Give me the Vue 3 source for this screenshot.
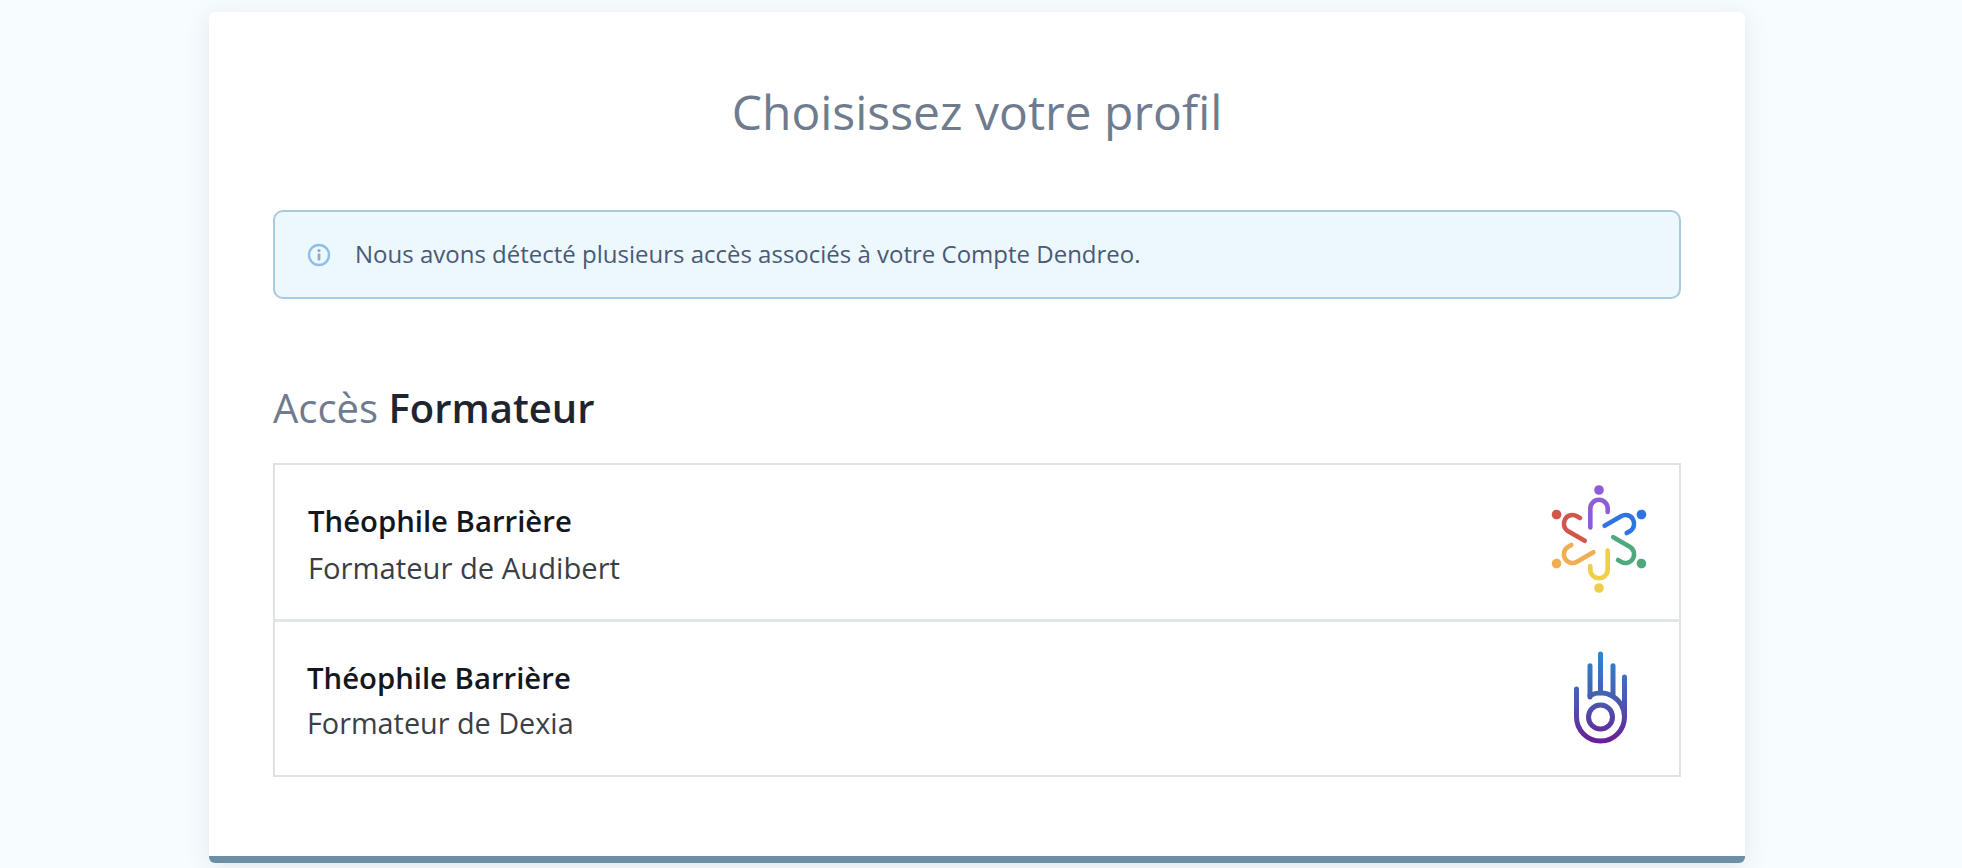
<script setup>
const rows = [
  { id: 'audibert', name: 'Théophile Barrière', role: 'Formateur de Audibert' },
  { id: 'dexia', name: 'Théophile Barrière', role: 'Formateur de Dexia' }
]
const figures = [
  { angle: 0, color: '#8f5cd8' },
  { angle: 60, color: '#2f74e2' },
  { angle: 120, color: '#4fa97c' },
  { angle: 180, color: '#efcf48' },
  { angle: 240, color: '#f0ae50' },
  { angle: 300, color: '#d3564a' }
]
</script>

<template>
  <main class="page">
    <section class="card">
      <h1 class="title">Choisissez votre profil</h1>

      <div class="alert">
        <svg class="info" viewBox="0 0 24 24" width="24" height="24" fill="none">
          <circle cx="12" cy="12" r="10" stroke="#8fbfe6" stroke-width="2.400" />
          <rect x="10.600" y="10.500" width="2.800" height="7" rx="0.800" fill="#8fa9c6" />
          <circle cx="12" cy="7.600" r="1.600" fill="#8fa9c6" />
        </svg>
        <span class="alert-text">Nous avons détecté plusieurs accès associés à votre Compte Dendreo.</span>
      </div>

      <h2 class="section"><span class="muted">Accès</span> <span class="strong">Formateur</span></h2>

      <ul class="list">
        <li v-for="row in rows" :key="row.id" class="row">
          <div class="who">
            <div class="name">{{ row.name }}</div>
            <div class="role">{{ row.role }}</div>
          </div>

          <svg v-if="row.id === 'audibert'" class="logo star" viewBox="-55 -55 110 110" width="110" height="110" fill="none">
            <g v-for="f in figures" :key="f.angle" :transform="`rotate(${f.angle})`">
              <circle cx="0" cy="-49" r="4.800" :fill="f.color" />
              <path d="M-8.700 -11.500 V-30.500 a8.700 8.700 0 0 1 17.400 0 V-27" :stroke="f.color" stroke-width="4.600" stroke-linecap="round" />
            </g>
          </svg>

          <svg v-else class="logo hand" viewBox="0 0 60 100" width="60" height="100" fill="none">
            <defs>
              <linearGradient id="handGrad" gradientUnits="userSpaceOnUse" x1="30" y1="4" x2="30" y2="94">
                <stop offset="0" stop-color="#2f86c8" />
                <stop offset="0.55" stop-color="#4a57ae" />
                <stop offset="1" stop-color="#6c1a96" />
              </linearGradient>
            </defs>
            <g stroke="url(#handGrad)" stroke-width="5" stroke-linecap="round">
              <path d="M6.500 39 V67 a24 24 0 0 0 48 0 V27" />
              <path d="M20 15.700 V47" />
              <path d="M30.500 4 V43" />
              <path d="M43 15.700 V45" />
              <path d="M20 45.400 A24 24 0 0 1 54.500 67" />
              <circle cx="30.500" cy="67" r="12" />
            </g>
          </svg>
        </li>
      </ul>
    </section>
  </main>
</template>

<style>
html, body { margin: 0; background: #f7fcfe; overflow: hidden; }
</style>

<style scoped>
.page {
  height: 868px;
  padding: 12px 0 0 209px;
  box-sizing: border-box;
  background: #f7fcfe;
  font-family: "Open Sans", "Noto Sans", sans-serif;
}
.card {
  width: 1536px;
  height: 851px;
  box-sizing: border-box;
  padding: 67px 64px 0;
  background: #fff;
  border-radius: 6px;
  border-bottom: 7px solid #6c8fa6;
  box-shadow: 0 4px 22px rgba(120, 140, 160, 0.18);
}
.title {
  margin: 0;
  text-align: center;
  font-size: 48px;
  line-height: 65px;
  font-weight: 400;
  color: #6f7b8f;
}
.alert {
  margin-top: 66px;
  height: 89px;
  box-sizing: border-box;
  padding: 0 32px;
  display: flex;
  align-items: center;
  gap: 24px;
  background: #edf8fd;
  border: 2px solid #a9c9de;
  border-radius: 10px;
  font-size: 24px;
  color: #4a5a75;
}
.alert-text { padding-bottom: 2px; }
.section {
  margin: 86px 0 0;
  font-size: 40px;
  line-height: 46px;
  font-weight: 400;
}
.muted { color: #6f7b8f; }
.strong { color: #1f2530; font-weight: 600; }
.list {
  list-style: none;
  margin: 32px 0 0;
  padding: 0;
  border: 2px solid #dfe2e7;
}
.row {
  height: 154px;
  box-sizing: border-box;
  padding: 0 32px 0 33px;
  display: flex;
  align-items: center;
  justify-content: space-between;
}
.row + .row {
  height: 156px;
  padding-left: 32px;
  border-top: 3px solid #e2e5e9;
}
.who { padding-top: 3px; }
.name {
  font-size: 29.300px;
  line-height: 36px;
  font-weight: 600;
  color: #14171c;
}
.role {
  margin-top: 12px;
  font-size: 29.200px;
  line-height: 34px;
  color: #3a3f47;
}
.row + .row .role { margin-top: 10px; font-size: 28.800px; }
.logo { flex: none; }
.star { margin: 0 -7px 7px 0; }
.hand { margin: 3px 17px 0 0; }
</style>
